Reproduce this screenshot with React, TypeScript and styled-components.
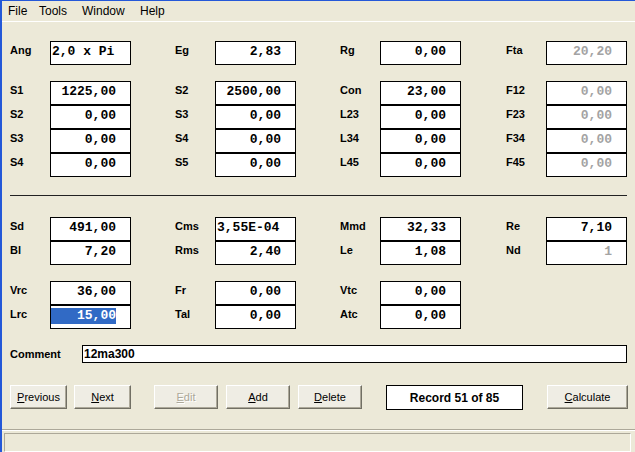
import React from 'react';
import styled, { createGlobalStyle } from 'styled-components';

const GlobalStyle = createGlobalStyle`
  html, body {
    margin: 0;
    padding: 0;
    background: #ece9d8;
    overflow: hidden;
  }
  * {
    box-sizing: border-box;
  }
`;

const Window = styled.div`
  width: 635px;
  height: 452px;
  display: flex;
  flex-direction: column;
  background: #ece9d8;
  border-top: 1px solid #2458d8;
  border-left: 2px solid #2458d8;
  font-family: 'Liberation Sans', Arial, sans-serif;
  color: #000;
`;

const MenuBar = styled.div`
  display: grid;
  grid-template-columns: 31px 43px 58px auto;
  height: 21px;
  padding-left: 6px;
  align-items: center;
  border-bottom: 1px solid #fff;
  font-size: 12px;
`;

const MenuItem = styled.span`
  line-height: 20px;
`;

const Form = styled.div`
  padding: 19px 0 0 8px;
  display: flex;
  flex-direction: column;
`;

const FieldGrid = styled.div<{ $mt?: number }>`
  display: grid;
  grid-template-columns: 165px 165px 166px 121px;
  margin-top: ${(p) => p.$mt ?? 0}px;
`;

const Group = styled.div`
  display: flex;
  flex-direction: column;
`;

const Field = styled.div`
  display: flex;
  align-items: flex-start;
`;

const Label = styled.span<{ $w?: number }>`
  width: ${(p) => p.$w ?? 40}px;
  flex: none;
  font-size: 11px;
  font-weight: bold;
  line-height: 18px;
`;

const ValueBox = styled.div<{ $left?: boolean; $disabled?: boolean }>`
  width: 81px;
  height: 24px;
  flex: none;
  background: #fff;
  border: 1px solid #000;
  font-family: 'Liberation Mono', 'Courier New', monospace;
  font-weight: bold;
  font-size: 13px;
  line-height: 20px;
  white-space: pre;
  text-align: ${(p) => (p.$left ? 'left' : 'right')};
  padding: ${(p) => (p.$left ? '0 0 0 1px' : '0 14px 0 0')};
  color: ${(p) => (p.$disabled ? '#a3a3a3' : '#000')};
`;

const Selected = styled.span`
  display: inline-block;
  background: #316ac5;
  color: #fff;
  padding-left: 26px;
  line-height: 16px;
  margin-top: 2px;
`;

const Separator = styled.div`
  width: 617px;
  height: 1px;
  background: #222;
  margin: 18px 0 21px;
`;

const CommentRow = styled.div`
  display: flex;
  align-items: flex-start;
  margin-top: 16px;
`;

const CommentBox = styled.div`
  width: 545px;
  height: 18px;
  background: #fff;
  border: 1px solid #000;
  padding-left: 1px;
  font-size: 12px;
  font-weight: bold;
  line-height: 16px;
`;

const ButtonRow = styled.div`
  display: flex;
  margin-top: 22px;
  height: 24px;
`;

const Button = styled.div<{ $w: number; $ml?: number; $disabled?: boolean }>`
  width: ${(p) => p.$w}px;
  margin-left: ${(p) => p.$ml ?? 0}px;
  height: 24px;
  display: flex;
  align-items: center;
  justify-content: center;
  font-size: 11px;
  background: #efede4;
  border-top: 1px solid #fff;
  border-left: 1px solid #fff;
  border-right: 1px solid #716f64;
  border-bottom: 1px solid #716f64;
  box-shadow: inset -1px -1px 0 #aca899;
  color: ${(p) => (p.$disabled ? '#aca899' : '#000')};
  text-shadow: ${(p) => (p.$disabled ? '1px 1px 0 #fff' : 'none')};
  u {
    text-underline-offset: 1px;
  }
`;

const RecordBox = styled.div<{ $ml: number }>`
  width: 137px;
  height: 25px;
  margin-left: ${(p) => p.$ml}px;
  background: #fff;
  border: 1px solid #000;
  display: flex;
  align-items: center;
  justify-content: center;
  font-size: 12px;
  font-weight: bold;
`;

const StatusBar = styled.div`
  margin-top: auto;
  height: 23px;
  border-top: 1px solid #aca899;
  box-shadow: inset 0 1px 0 #fff;
  padding: 3px 2px 0 2px;
`;

const StatusPanel = styled.div`
  height: 19px;
  width: 627px;
  border-top: 1px solid #aca899;
  border-left: 1px solid #aca899;
  border-right: 1px solid #fff;
  border-bottom: 1px solid #fff;
`;

type FieldDef = { label: string; value: string; left?: boolean; disabled?: boolean; selected?: boolean };

const topRow: FieldDef[][] = [
  [{ label: 'Ang', value: '2,0 x Pi', left: true }],
  [{ label: 'Eg', value: '2,83' }],
  [{ label: 'Rg', value: '0,00' }],
  [{ label: 'Fta', value: '20,20', disabled: true }],
];

const sizeRows: FieldDef[][] = [
  [
    { label: 'S1', value: '1225,00' },
    { label: 'S2', value: '0,00' },
    { label: 'S3', value: '0,00' },
    { label: 'S4', value: '0,00' },
  ],
  [
    { label: 'S2', value: '2500,00' },
    { label: 'S3', value: '0,00' },
    { label: 'S4', value: '0,00' },
    { label: 'S5', value: '0,00' },
  ],
  [
    { label: 'Con', value: '23,00' },
    { label: 'L23', value: '0,00' },
    { label: 'L34', value: '0,00' },
    { label: 'L45', value: '0,00' },
  ],
  [
    { label: 'F12', value: '0,00', disabled: true },
    { label: 'F23', value: '0,00', disabled: true },
    { label: 'F34', value: '0,00', disabled: true },
    { label: 'F45', value: '0,00', disabled: true },
  ],
];

const driverRows: FieldDef[][] = [
  [
    { label: 'Sd', value: '491,00' },
    { label: 'Bl', value: '7,20' },
  ],
  [
    { label: 'Cms', value: '3,55E-04', left: true },
    { label: 'Rms', value: '2,40' },
  ],
  [
    { label: 'Mmd', value: '32,33' },
    { label: 'Le', value: '1,08' },
  ],
  [
    { label: 'Re', value: '7,10' },
    { label: 'Nd', value: '1', disabled: true },
  ],
];

const boxRows: FieldDef[][] = [
  [
    { label: 'Vrc', value: '36,00' },
    { label: 'Lrc', value: '15,00', selected: true },
  ],
  [
    { label: 'Fr', value: '0,00' },
    { label: 'Tal', value: '0,00' },
  ],
  [
    { label: 'Vtc', value: '0,00' },
    { label: 'Atc', value: '0,00' },
  ],
];

const FieldColumns: React.FC<{ groups: FieldDef[][]; mt?: number }> = ({ groups, mt }) => (
  <FieldGrid $mt={mt}>
    {groups.map((group, gi) => (
      <Group key={gi}>
        {group.map((f) => (
          <Field key={f.label}>
            <Label>{f.label}</Label>
            <ValueBox $left={f.left} $disabled={f.disabled}>
              {f.selected ? <Selected>{f.value}</Selected> : f.value}
            </ValueBox>
          </Field>
        ))}
      </Group>
    ))}
  </FieldGrid>
);

const App: React.FC = () => {
  return (
    <>
      <GlobalStyle />
      <Window>
        <MenuBar>
          <MenuItem>File</MenuItem>
          <MenuItem>Tools</MenuItem>
          <MenuItem>Window</MenuItem>
          <MenuItem>Help</MenuItem>
        </MenuBar>

        <Form>
          <FieldColumns groups={topRow} />
          <FieldColumns groups={sizeRows} mt={16} />
          <Separator />
          <FieldColumns groups={driverRows} />
          <FieldColumns groups={boxRows} mt={16} />

          <CommentRow>
            <Label $w={72}>Comment</Label>
            <CommentBox>12ma300</CommentBox>
          </CommentRow>

          <ButtonRow>
            <Button $w={57}><span><u>P</u>revious</span></Button>
            <Button $w={57} $ml={7}><span><u>N</u>ext</span></Button>
            <Button $w={64} $ml={23} $disabled><span><u>E</u>dit</span></Button>
            <Button $w={64} $ml={8}><span><u>A</u>dd</span></Button>
            <Button $w={64} $ml={8}><span><u>D</u>elete</span></Button>
            <RecordBox $ml={24}>Record 51 of 85</RecordBox>
            <Button $w={81} $ml={24}><span><u>C</u>alculate</span></Button>
          </ButtonRow>
        </Form>

        <StatusBar>
          <StatusPanel />
        </StatusBar>
      </Window>
    </>
  );
};

export default App;
